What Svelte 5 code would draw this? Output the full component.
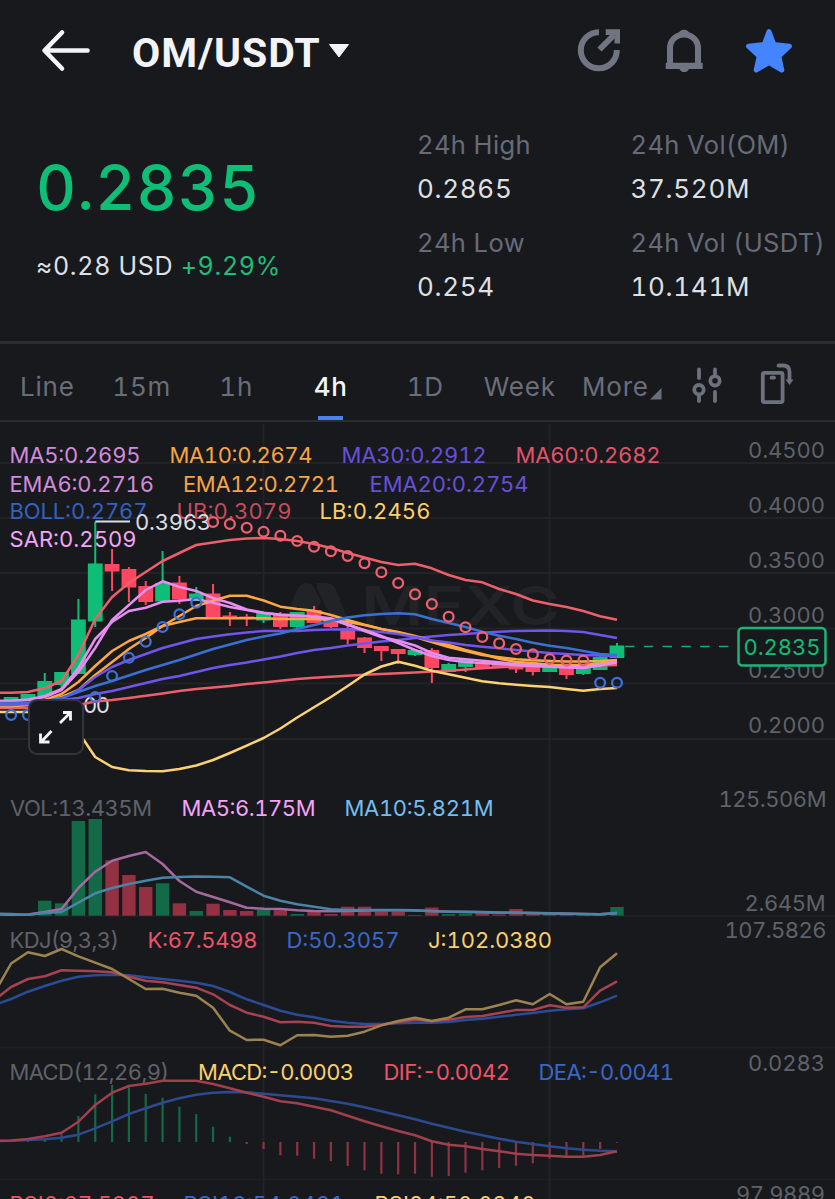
<script lang="ts">
    type Label = { text: string; x: number; y: number; w: number; color: string };

    const stats = [
        { label: '24h High', value: '0.2865' },
        { label: '24h Vol(OM)', value: '37.520M' },
        { label: '24h Low', value: '0.254' },
        { label: '24h Vol (USDT)', value: '10.141M' }
    ];

    const tabs = ['Line', '15m', '1h', '4h', '1D', 'Week'];
    let active = $state('4h');

    const STEP = 16.83;
    const px = (i: number) => 11.1 + i * STEP;

    // series start one candle left of the visible area
    function line(values: number[]): string {
        return values.map((v, i) => `${px(i - 1).toFixed(1)},${v}`).join(' ');
    }

    const up = '#0ebd76';
    const down = '#fe4761';

    // [body top, body bottom, high, low, rising]
    const candles: [number, number, number, number, number][] = [
        [697, 702, 697, 702, 1], [694, 700, 694, 700, 1], [681, 696, 673, 696, 1],
        [672, 685, 672, 688, 1], [619.5, 674, 599, 674, 1], [563.5, 621.5, 522, 627, 1],
        [564, 571.5, 549, 591, 0], [569, 587.5, 567, 602, 0], [586, 602, 581, 605, 0],
        [583, 601.5, 551, 602, 1], [582.5, 599.5, 576, 604, 0], [593.5, 601, 587, 601, 1],
        [593.5, 618, 584, 619, 0], [615.5, 617.5, 612, 626, 0], [616.5, 618.5, 614, 626, 0],
        [613, 620.5, 613, 623, 1], [615, 627, 612, 629, 0], [612, 627, 612, 629, 1],
        [610, 623, 606, 623, 0], [620, 627, 620, 628, 0], [628, 639.5, 626, 644, 0],
        [637.5, 648, 637, 653, 0], [646, 651, 646, 661, 0], [649, 654, 649, 664, 0],
        [650, 655, 649, 656, 1], [650, 668, 648, 683, 0], [664, 672, 663, 672, 1],
        [660, 667, 660, 672, 1], [662, 668, 662, 668, 0], [663, 667, 663, 667, 0],
        [665, 669.5, 665, 673, 0], [666, 672, 666, 675.5, 0], [667, 672, 667, 672, 1],
        [668, 675, 668, 679, 0], [668, 674, 668, 675, 1], [657, 670, 656, 670, 1],
        [645.5, 658, 643, 658, 1]
    ];

    const overlays = [
        { color: '#ec5f6b', values: [708, 708, 708, 707, 706, 705, 701.5, 700, 698, 695.7, 693.5, 691, 689, 687.5, 686, 684, 682.5, 680.7, 679, 677.7, 676.7, 675.7, 674.8, 674, 673.2, 672.4, 671.6, 670.7, 669.5, 668.2, 667.3, 666.6, 666.2, 666, 666, 666, 665.5, 665] },
        { color: '#6f55ec', values: [706, 706, 705, 703, 700, 698, 694, 691, 687, 683, 679, 676, 672, 668, 665, 662.5, 659.5, 656.5, 653, 650, 648, 645.5, 643.5, 641.5, 640, 638, 636.5, 635, 634, 632.7, 631.7, 631, 630.7, 630.5, 631, 632, 635, 638] },
        { color: '#ffa843', values: [706, 706, 705, 702, 697, 690, 675, 662, 649, 638, 626, 616, 606, 600.7, 595.7, 595.7, 600.5, 606.7, 609, 610.7, 615, 620, 624.7, 629, 632, 636, 640.7, 645, 650, 654, 658.7, 662, 663, 664.7, 665, 665, 663.5, 661] },
        { color: '#ffa843', values: [706, 706, 704.5, 700, 694, 682, 666, 651, 641, 634, 626, 622, 618.3, 618.3, 618.3, 618.3, 618.3, 619, 619, 619, 620, 622, 625, 629, 632.5, 637, 642, 647, 651, 655, 657.3, 659.3, 660.3, 661, 661.5, 661.5, 661, 660] },
        { color: '#6f55ec', values: [705, 705, 704, 702, 699, 690, 677, 667, 660, 654, 648, 643.5, 639, 636.5, 634.3, 632.5, 631, 631, 631, 630, 629.5, 629.3, 630.5, 632, 634, 637, 640.5, 642.5, 645, 646.8, 648.3, 650, 651.5, 653, 654, 655, 655.5, 656] },
        { color: '#e58ff0', values: [701, 701, 700, 697, 690, 672, 648, 620, 605, 590, 581.3, 587, 591, 598, 603, 609.5, 612.7, 615, 615.7, 616.3, 619, 625, 630, 636, 643, 650, 656, 660, 662, 663, 664, 665.3, 666, 666.7, 667.5, 668, 665.5, 661.5] },
        { color: '#e58ff0', values: [701, 701, 699.5, 696, 689, 668, 639, 622, 611, 607.7, 601.7, 600.7, 599, 602.7, 607, 610, 613, 614.5, 615.5, 616.7, 618.3, 624, 631, 637, 640.7, 645.5, 653, 657.7, 659.2, 660.7, 662.3, 664, 665, 666, 666.7, 667, 665, 662.5] },
        { color: '#3a70d4', values: [703, 703, 702.5, 701, 698, 692, 686, 681, 675.5, 670, 665, 660, 654.5, 649, 644.5, 640, 636.5, 633.5, 629, 625, 621, 617.5, 615.3, 614, 613.3, 614.3, 619, 623, 627, 631.7, 635.7, 639, 642.7, 645.7, 648, 651, 654, 655] },
        { color: '#ec5f6b', values: [692.7, 692.7, 692, 688, 681, 655, 619, 597, 583, 572, 561, 553, 545, 542.5, 540, 538.5, 538, 539, 541, 544, 548, 553, 557.5, 562, 565, 563.7, 568.3, 575, 580, 582.3, 589, 594, 600.5, 604, 607, 611, 616.3, 619.7] },
        { color: '#fdd273', values: [712, 712, 712, 714, 718, 732, 757, 767, 770.3, 771, 771.3, 769, 765.5, 760, 753, 745.7, 738, 728.5, 717.5, 707.3, 697, 686, 674.5, 666.5, 661.7, 665.7, 670.7, 674.3, 677.7, 681.3, 683.3, 684.7, 686, 687, 689, 690.7, 689, 688] }
    ];

    const sarHigh = [522, 524, 527.7, 531.7, 535.7, 541, 546.7, 551.3, 556, 563.3, 572.3, 583, 594.3, 604, 616.7, 627.3, 637, 643.3, 649, 654.3, 659, 660.5, 660.5];
    const sarLow = [[0, 715], [1, 715], [5, 697], [6, 676], [7, 657.7], [8, 641.7], [9, 627], [10, 614.3], [11, 602.7], [35, 682.7], [36, 682.7]];

    const volumeTops = [915, 915, 900.7, 903.3, 821, 819, 860.3, 875, 887, 883.3, 903.3, 911, 903.7, 910, 911, 910, 910.3, 914, 912, 914, 906.7, 906.7, 911.5, 911.5, 915, 907.5, 914, 913.7, 913.3, 914.5, 909, 913, 914, 914, 915, 915, 907];
    const volumeUp = [0, 1, 2, 3, 4, 5, 9, 11, 15, 17, 24, 26, 27, 32, 34, 35, 36];
    const volumeMa5 = [914.5, 914.7, 914.5, 912, 909, 888, 871.7, 860.7, 856, 852, 864, 881, 891.7, 897, 902.3, 907.7, 908.7, 909, 910.3, 911, 911.3, 911, 910.5, 910.3, 910.3, 910.5, 911, 911.7, 912, 912.3, 912.7, 912.7, 913, 913.3, 913.7, 914, 914.3, 913];
    const volumeMa10 = [913.7, 914, 914.7, 913, 912, 902.7, 893.3, 888, 884, 880.7, 877.7, 877, 876.5, 876.7, 877.3, 886.7, 895.7, 900.7, 904.3, 906.7, 909.3, 910, 910, 910, 910, 910.3, 911.3, 911.5, 911.8, 912, 912.5, 912.7, 913, 913.3, 913.5, 914, 914.3, 913];

    const kdjK = [1000, 987, 979, 976.3, 970.3, 970.7, 971.3, 972.3, 976.7, 980.7, 982.3, 985, 987.7, 994.3, 1005, 1012.7, 1016.7, 1022.3, 1021.7, 1022.7, 1026, 1026.7, 1026.7, 1025, 1022.3, 1019.7, 1021.3, 1019.7, 1017, 1016, 1013, 1010, 1010, 1005.3, 1007.7, 1007.3, 990.7, 981.3];
    const kdjD = [1005, 999, 991.7, 986, 980.7, 976.7, 975.3, 974.7, 975.3, 977.3, 979, 980.7, 982.7, 986, 992, 999.3, 1005, 1010.7, 1014.7, 1017.3, 1020.7, 1022.7, 1024, 1024, 1023.3, 1022.7, 1022.7, 1022, 1020, 1018.7, 1016.7, 1014.7, 1013, 1010.7, 1009.3, 1008.3, 1002.3, 995.7];
    const kdjJ = [993, 963.5, 952.3, 956, 949, 956.3, 962.7, 969, 979, 989, 988.7, 992.7, 995.7, 1007.7, 1030.7, 1040, 1039.7, 1045.3, 1035.3, 1035, 1036.7, 1035.7, 1031.7, 1025.3, 1021, 1017.7, 1021, 1017.7, 1009.3, 1009.3, 1005, 1000.3, 1004.3, 994, 1004.3, 1001.7, 967.3, 953.3];

    const MACD_ZERO = 1142;
    const macd = [1141.5, 1141, 1139, 1134.3, 1116, 1094.3, 1085, 1087.3, 1094, 1097.7, 1106.7, 1114, 1126.7, 1136.7, 1144, 1149, 1155.3, 1155.7, 1158.7, 1161.3, 1166, 1170.3, 1173.7, 1174.3, 1173.7, 1176.7, 1176, 1172.7, 1170.3, 1168, 1165.7, 1163.3, 1158.7, 1157.3, 1155.7, 1149, 1142.7];
    const dif = [1141, 1140.5, 1139, 1136.3, 1132.7, 1121.7, 1105, 1092.7, 1086, 1083.7, 1080.7, 1080.7, 1080.7, 1084, 1088.3, 1092.7, 1096.7, 1101.3, 1103.3, 1106.7, 1110.3, 1115.7, 1121.3, 1126.3, 1131, 1135.3, 1141.3, 1144.7, 1146.3, 1149, 1151.3, 1153.7, 1155, 1155.7, 1156.7, 1156.7, 1155, 1151.3];
    const dea = [1141, 1140.7, 1140, 1139.3, 1137.7, 1134.7, 1128.3, 1121.3, 1114, 1108.3, 1102.7, 1098.3, 1094.7, 1092.7, 1092, 1092.3, 1093.7, 1095.3, 1096.7, 1098.3, 1101, 1103.7, 1107.3, 1111.3, 1115.3, 1119.3, 1123.7, 1127.7, 1131.7, 1135.3, 1138.7, 1141.7, 1144, 1146.3, 1148.3, 1149.7, 1150.7, 1151.3];

    const lowerLines = [
        { color: '#a46a9f', values: volumeMa5 },
        { color: '#4b84a4', values: volumeMa10 },
        { color: '#2a4c96', values: kdjD },
        { color: '#a64251', values: kdjK },
        { color: '#9c8452', values: kdjJ },
        { color: '#2c4b8f', values: dea },
        { color: '#a03f4e', values: dif }
    ];

    const pink = '#d28bdc';
    const violet = '#6650da';
    const orange = '#f7a444';
    const blue = '#3a67c8';
    const red = '#ed5268';
    const yellow = '#fbd06c';
    const grey = '#5f6269';

    const labels: Label[] = [
        { text: 'MA5:0.2695', x: 9.5, y: 463, w: 131, color: pink },
        { text: 'MA10:0.2674', x: 169.5, y: 463, w: 143, color: orange },
        { text: 'MA30:0.2912', x: 341.5, y: 463, w: 145, color: violet },
        { text: 'MA60:0.2682', x: 515.5, y: 463, w: 145, color: '#e0546a' },
        { text: 'EMA6:0.2716', x: 9.5, y: 491.5, w: 144.5, color: pink },
        { text: 'EMA12:0.2721', x: 183, y: 491.5, w: 156, color: orange },
        { text: 'EMA20:0.2754', x: 369.5, y: 491.5, w: 159, color: violet },
        { text: 'BOLL:0.2767', x: 9.5, y: 519, w: 138, color: '#3461bd' },
        { text: 'UB:0.3079', x: 176.5, y: 519, w: 115, color: '#c64c5b' },
        { text: 'LB:0.2456', x: 319.5, y: 519, w: 111, color: yellow },
        { text: 'SAR:0.2509', x: 9.5, y: 547, w: 127, color: '#f3a6f5' },
        { text: 'VOL:13.435M', x: 10, y: 816, w: 142, color: grey },
        { text: 'MA5:6.175M', x: 181.5, y: 816, w: 134, color: '#f6a2f7' },
        { text: 'MA10:5.821M', x: 344.5, y: 816, w: 149, color: '#74bdf0' },
        { text: 'KDJ(9,3,3)', x: 9.5, y: 948, w: 109.5, color: grey },
        { text: 'K:67.5498', x: 147.5, y: 948, w: 110, color: red },
        { text: 'D:50.3057', x: 286.5, y: 948, w: 113, color: blue },
        { text: 'J:102.0380', x: 428, y: 948, w: 124, color: yellow },
        { text: 'MACD(12,26,9)', x: 9.5, y: 1080, w: 159.5, color: grey },
        { text: 'MACD:-0.0003', x: 198, y: 1080, w: 156, color: yellow },
        { text: 'DIF:-0.0042', x: 383.5, y: 1080, w: 126.5, color: red },
        { text: 'DEA:-0.0041', x: 538.5, y: 1080, w: 135.5, color: blue },
        { text: 'RSI6:67.5907', x: 9.5, y: 1212, w: 145, color: red },
        { text: 'RSI12:54.0421', x: 183.5, y: 1212, w: 161, color: blue },
        { text: 'RSI24:50.0340', x: 374.5, y: 1212, w: 161, color: yellow },
        { text: '0.4500', x: 748, y: 457.5, w: 77, color: grey },
        { text: '0.4000', x: 748, y: 512.5, w: 77, color: grey },
        { text: '0.3500', x: 748, y: 567.5, w: 77, color: grey },
        { text: '0.3000', x: 748, y: 622.5, w: 77, color: grey },
        { text: '0.2500', x: 748, y: 677.5, w: 77, color: grey },
        { text: '0.2000', x: 748, y: 732.5, w: 77, color: grey },
        { text: '125.506M', x: 718.5, y: 806.5, w: 108, color: grey },
        { text: '2.645M', x: 744.5, y: 910.5, w: 81, color: grey },
        { text: '107.5826', x: 724.5, y: 938, w: 102, color: grey },
        { text: '0.0283', x: 748, y: 1070.5, w: 77, color: grey },
        { text: '97.9889', x: 736, y: 1202, w: 89, color: grey }
    ];

    const gridRows = [463, 518, 573, 628.5, 683.5, 739, 916, 1047.5, 1179.5];
    const gridCols = [263.5, 549.5];
</script>

<div class="screen">
    <header>
        <svg class="back" width="50" height="44" viewBox="41 29 50 44">
            <path d="M62 32.5 44.5 50.5 62 68.5M45 50.5H87.5" />
        </svg>
        <h1>OM/USDT</h1>
        <svg class="caret" width="22" height="16" viewBox="0 0 22 16">
            <path d="M1.5 1.5h19L11 14z" />
        </svg>
        <div class="actions">
            <svg width="46" height="46" viewBox="576 28 46 46">
                <path class="stroke" d="M599 32.3A18 18 0 1 0 616.8 50" />
                <path class="stroke" d="M599.5 49.5 614 35" />
                <path class="fill" d="M605.7 29.3H620V43.5L614.5 43.5V35H605.7z" />
            </svg>
            <svg width="40" height="46" viewBox="663 28 40 46">
                <path class="stroke" d="M670 65V48A14 13.5 0 0 1 698 48V65" />
                <path class="fill" d="M665.7 62.7H702.7V69H689A5 4.5 0 0 1 679.5 69H665.7zM678.5 34A5.7 5.7 0 0 1 689.5 34z" />
            </svg>
            <svg width="50" height="46" viewBox="744 28 50 46">
                <path class="star" d="M769 31.5 773.8 44.5 789.5 46.2 778.8 56.2 781.8 70 769 62.5 756.2 70 759.2 56.2 748.5 46.2 764.2 44.5z" />
            </svg>
        </div>
    </header>

    <section class="summary">
        <div class="quote">
            <div class="price">0.2835</div>
            <div class="sub">≈0.28 USD <span>+9.29%</span></div>
        </div>
        <dl>
            {#each stats as s}
                <div>
                    <dt>{s.label}</dt>
                    <dd>{s.value}</dd>
                </div>
            {/each}
        </dl>
    </section>

    <nav>
        {#each tabs as tab}
            <button class="tab" class:active={tab === active} onclick={() => (active = tab)}>{tab}</button>
        {/each}
        <button class="more">
            More
            <svg width="14" height="14" viewBox="0 0 14 14"><path d="M12.5 1V12.5H1z" /></svg>
        </button>
        <svg class="tool settings" width="34" height="40" viewBox="691 367 34 40">
            <path d="M700 370.5V379M700 396.5V402M716 370.5V375M716 393V402" />
            <circle cx="700" cy="390.7" r="4.7" />
            <circle cx="716" cy="381.8" r="4.7" />
        </svg>
        <svg class="tool" width="38" height="44" viewBox="759 363 38 44">
            <rect x="763.8" y="373.8" width="19.8" height="29.3" rx="1.5" />
            <path d="M772.5 378.7H775M779.5 366.5H784Q790.5 366.5 790.5 373V380" />
            <path class="head" d="M786.5 380.5H794.5L790.5 386z" />
        </svg>
    </nav>

    <div class="chart">
        <svg width="835" height="777" viewBox="0 422 835 777">
            <g class="grid">
                {#each gridRows as y, i}
                    <line x1="0" x2="835" y1={y} y2={y} opacity={i > 5 ? 0.6 : 1} />
                {/each}
                {#each gridCols as x}
                    <line x1={x} x2={x} y1="424" y2="1199" />
                {/each}
            </g>

            <g class="watermark">
                <path d="M283 625 296 592Q300 583 307 583Q312 583 315 589L321 601 312 625zM317 583H326Q333 583 336 590L348 620 341 625Q334 625 331 618L317 588z" />
                <text x="361" y="625" textLength="199" lengthAdjust="spacingAndGlyphs">MEXC</text>
            </g>

            {#each labels as l}
                <text class="label" x={l.x} y={l.y} textLength={l.w} fill={l.color}>{l.text}</text>
            {/each}

            {#each candles as [top, bottom, high, low, rising], i}
                <g fill={rising ? up : down}>
                    <rect x={px(i) - 1} y={high} width="2" height={low - high} />
                    <rect x={px(i) - 7.4} y={top} width="14.8" height={bottom - top} />
                </g>
            {/each}

            <path class="peak" d="M95.3 521.5H130" />
            <text class="label light" x="135" y="530" textLength="76">0.3963</text>
            <text class="label light" x="83" y="713" textLength="27">00</text>

            {#each overlays as o}
                <polyline points={line(o.values)} stroke={o.color} />
            {/each}

            <g class="sar">
                {#each sarHigh as y, i}
                    <circle cx={px(i + 12)} cy={y} r="4.9" stroke="#f0606f" />
                {/each}
                {#each sarLow as [i, y]}
                    <circle cx={px(i)} cy={y} r="4.9" stroke="#3c72d8" />
                {/each}
            </g>

            <path class="last" d="M625 646.5H730" />
            <rect class="last-box" x="738.5" y="628" width="87" height="37.5" rx="4" />
            <text class="label" x="743.5" y="655" textLength="77" fill={up}>0.2835</text>

            {#each volumeTops as y, i}
                <rect x={px(i) - 6.7} {y} width="13.4" height={915.7 - y} fill={volumeUp.includes(i) ? '#136a49' : '#913142'} />
            {/each}
            {#each macd as y, i}
                <rect
                    x={px(i) - 1.1}
                    y={Math.min(y, MACD_ZERO)}
                    width="2.2"
                    height={Math.abs(y - MACD_ZERO)}
                    fill={y < MACD_ZERO ? '#126847' : '#8e3342'}
                />
            {/each}
            {#each lowerLines as l}
                <polyline points={line(l.values)} stroke={l.color} />
            {/each}
        </svg>

        <button class="expand" aria-label="Expand chart">
            <svg width="52" height="52" viewBox="31 701 52 52">
                <path d="M61 723 71 713M64 712.5H71.5V720.5M52.5 731 42.5 741.5M41.5 733.5V742H50.5" />
            </svg>
        </button>
    </div>
</div>

<style>
    :global(body) {
        background: #18191d;
    }

    .screen {
        width: 835px;
        height: 1199px;
        overflow: hidden;
        background: #18191d;
        color: #dfe0e4;
        font-family: Inter, 'Liberation Sans', sans-serif;
        font-variant-numeric: tabular-nums;
    }

    svg {
        display: block;
        flex: none;
    }

    button {
        padding: 0;
        border: 0;
        background: none;
        color: inherit;
        font: inherit;
        font-variant-numeric: inherit;
        letter-spacing: inherit;
    }

    header {
        display: flex;
        align-items: center;
        height: 102px;
        padding: 0 41px;
    }

    .back path {
        fill: none;
        stroke: #f3f4f8;
        stroke-width: 4.6;
        stroke-linecap: round;
        stroke-linejoin: round;
    }

    h1 {
        width: 186px;
        margin: 4px 0 0 41px;
        color: #f3f4f8;
        font: 700 41px/48px Roboto, sans-serif;
        letter-spacing: 0.9px;
        white-space: nowrap;
    }

    .caret {
        margin-left: 10px;
    }

    .caret path {
        fill: #f3f4f8;
        stroke: #f3f4f8;
        stroke-linejoin: round;
    }

    .actions {
        display: flex;
        gap: 41px;
        margin-left: auto;
    }

    .actions .stroke {
        fill: none;
        stroke: #707581;
        stroke-width: 6;
    }

    .actions .fill {
        fill: #707581;
    }

    .star {
        fill: #4484ff;
        stroke: #4484ff;
        stroke-width: 5;
        stroke-linejoin: round;
    }

    .summary {
        display: flex;
        height: 239px;
    }

    .quote {
        width: 381px;
        padding: 50px 0 0 36px;
    }

    .price {
        color: #0ebd76;
        font-size: 62px;
        font-weight: 500;
        line-height: 72px;
        letter-spacing: 1.2px;
    }

    .sub {
        margin-top: 26px;
        font-size: 25px;
        line-height: 32px;
        letter-spacing: 0.7px;
        white-space: nowrap;
    }

    .sub span {
        color: #1ebd7a;
    }

    dl {
        display: grid;
        grid-template-columns: 213.5px 203px;
        grid-auto-rows: 98px;
        margin: 27px 0 0;
        font-size: 26px;
        white-space: nowrap;
    }

    dt {
        color: #666b77;
        font-size: 25.5px;
        line-height: 32px;
        letter-spacing: 0.4px;
    }

    dd {
        margin: 12px 0 0;
        line-height: 32px;
        letter-spacing: 0.7px;
    }

    nav {
        display: flex;
        align-items: center;
        box-sizing: border-box;
        height: 81px;
        border-top: 3px solid #2b2c32;
        border-bottom: 2px solid #2b2c32;
        color: #6a6e79;
        font-size: 26px;
        letter-spacing: 0.8px;
    }

    .tab {
        position: relative;
        width: 94.5px;
        height: 76px;
        padding-top: 9px;
    }

    .tab.active {
        color: #f5f6fa;
        font-weight: 500;
    }

    .tab.active::after {
        content: '';
        position: absolute;
        bottom: 0;
        left: 34px;
        width: 25px;
        height: 4px;
        background: #4b82ee;
    }

    .more {
        display: flex;
        align-items: flex-end;
        width: 80px;
        margin-left: 15px;
        padding-top: 9px;
    }

    .more svg {
        margin-bottom: 1px;
    }

    .more path {
        fill: #6a6e79;
    }

    .tool {
        margin: 4px 0 0 34px;
        fill: none;
        stroke: #6d717c;
        stroke-width: 3.8;
        stroke-linecap: round;
    }

    .settings {
        margin: 8px 0 0 28px;
    }

    .head {
        fill: #6d717c;
        stroke: none;
    }

    .chart {
        position: relative;
    }

    .grid line {
        stroke: #222327;
        stroke-width: 2;
    }

    .watermark {
        fill: #222327;
        font-size: 53px;
        font-weight: 600;
    }

    .label {
        font-size: 22px;
    }

    .light {
        fill: #dcdde1;
    }

    .peak {
        stroke: #dcdde1;
        stroke-width: 2;
    }

    polyline {
        fill: none;
        stroke-width: 2.5;
        stroke-linejoin: round;
    }

    .sar circle {
        fill: none;
        stroke-width: 2.3;
    }

    .last {
        stroke: #1fa874;
        stroke-width: 1.5;
        stroke-dasharray: 9.4 9.4;
    }

    .last-box {
        fill: #18191d;
        stroke: #1bb578;
        stroke-width: 2.5;
    }

    .expand {
        position: absolute;
        top: 277px;
        left: 28px;
        width: 56px;
        height: 56px;
        border: 2px solid #33353b;
        border-radius: 9px;
        background: #17181d;
    }

    .expand path {
        fill: none;
        stroke: #f3f4f8;
        stroke-width: 2.8;
    }
</style>
